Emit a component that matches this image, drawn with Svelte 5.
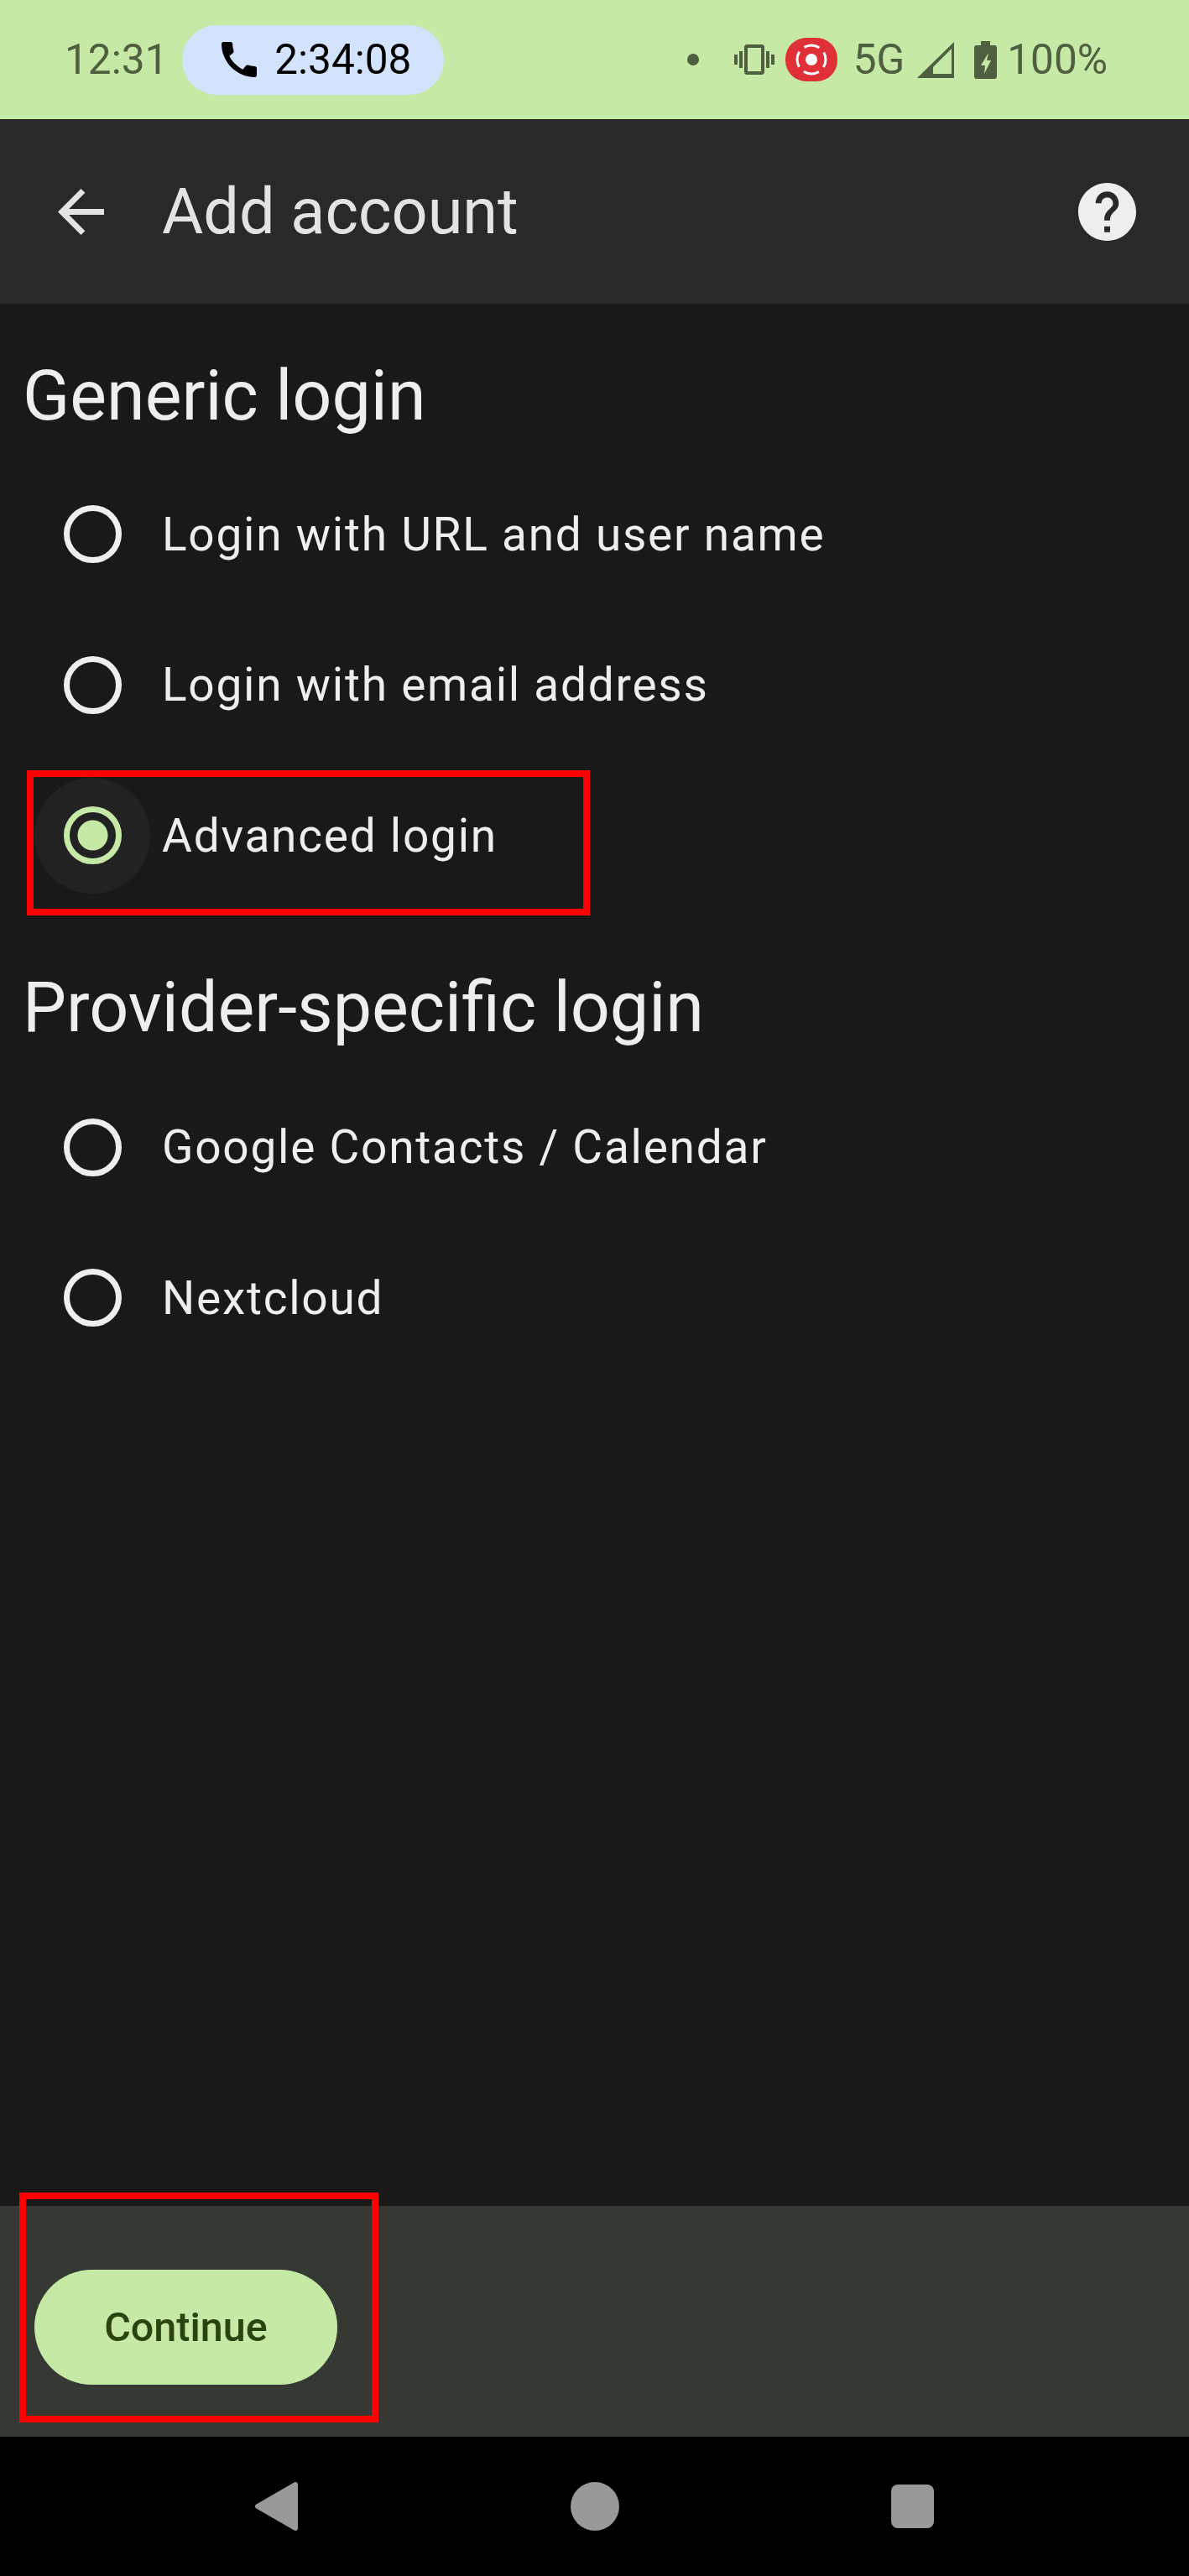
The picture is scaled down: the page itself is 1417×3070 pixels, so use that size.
<script>
	const genericLogins = [
		{ label: 'Login with URL and user name', selected: false },
		{ label: 'Login with email address', selected: false },
		{ label: 'Advanced login', selected: true }
	];
	const providerLogins = [
		{ label: 'Google Contacts / Calendar', selected: false },
		{ label: 'Nextcloud', selected: false }
	];
</script>

{#snippet radioRow(item)}
	<div class="row">
		<span class="radio-wrap" class:halo={item.selected}>
			<span class="radio" class:checked={item.selected}></span>
		</span>
		<span class="row-label">{item.label}</span>
		{#if item.selected}
			<span class="mark mark-row"></span>
		{/if}
	</div>
{/snippet}

<main class="screen">
	<!-- Status bar -->
	<header class="status">
		<span class="time">12:31</span>
		<div class="call-pill">
			<svg class="phone" viewBox="3 3 18 18" aria-hidden="true">
				<path d="M20.01 15.38c-1.23 0-2.42-.2-3.53-.56-.35-.12-.74-.03-1.01.24l-1.57 1.97c-2.83-1.35-5.48-3.9-6.89-6.83l1.95-1.66c.27-.28.35-.67.24-1.02-.37-1.11-.56-2.3-.56-3.53 0-.54-.45-.99-.99-.99H4.19C3.65 3 3 3.24 3 3.99 3 13.28 10.73 21 20.01 21c.71 0 .99-.63.99-1.18v-3.45c0-.54-.45-.99-.99-.99z" />
			</svg>
			<span class="call-time">2:34:08</span>
		</div>
		<div class="status-right">
			<span class="dot"></span>
			<svg class="vibrate" viewBox="0 3 24 18" aria-hidden="true">
				<path d="M0 15h2V9H0v6zm3 2h2V7H3v10zm19-8v6h2V9h-2zm-3 8h2V7h-2v10zM16.5 3h-9C6.67 3 6 3.67 6 4.5v15c0 .83.67 1.5 1.5 1.5h9c.83 0 1.5-.67 1.5-1.5v-15c0-.83-.67-1.5-1.5-1.5zM16 19H8V5h8v14z" />
			</svg>
			<svg class="record" viewBox="0 0 62 52" aria-hidden="true">
				<rect width="62" height="52" rx="25" fill="#df3038" />
				<circle cx="31" cy="26" r="7" fill="#fff" />
				<circle cx="31" cy="26" r="17" fill="none" stroke="#fff" stroke-width="3" stroke-dasharray="19 7.7" stroke-dashoffset="9.5" />
			</svg>
			<span class="network">5G</span>
			<svg class="signal" viewBox="0 0 44 43" aria-hidden="true">
				<path fill-rule="evenodd" d="M44 0V43H0ZM19 38H41V8L19 30Z" />
			</svg>
			<svg class="battery" viewBox="0 0 27 45" aria-hidden="true">
				<path d="M8 0h11v5h5a3 3 0 0 1 3 3v34a3 3 0 0 1-3 3H3a3 3 0 0 1-3-3V8a3 3 0 0 1 3-3h5z" />
				<path class="bolt" d="M17 14L8 29h5l-1 10 8-16h-5z" />
			</svg>
			<span class="percent">100%</span>
		</div>
	</header>

	<!-- App bar -->
	<div class="appbar">
		<svg class="back" viewBox="4 4 16 16" aria-hidden="true">
			<path d="M20 11H7.83l5.59-5.59L12 4l-8 8 8 8 1.41-1.41L7.83 13H20v-2z" />
		</svg>
		<h1 class="title">Add account</h1>
		<svg class="help" viewBox="2 2 20 20" aria-hidden="true">
			<path d="M12 2C6.48 2 2 6.48 2 12s4.48 10 10 10 10-4.48 10-10S17.52 2 12 2zm1 17h-2v-2h2v2zm2.07-7.75l-.9.92C13.45 12.9 13 13.5 13 15h-2v-.5c0-1.1.45-2.1 1.17-2.83l1.24-1.26c.37-.36.59-.86.59-1.41 0-1.1-.9-2-2-2s-2 .9-2 2H8c0-2.21 1.79-4 4-4s4 1.79 4 4c0 .88-.36 1.68-.93 2.25z" />
		</svg>
	</div>

	<!-- Login options -->
	<section class="content">
		<h2 class="heading first">Generic login</h2>
		{#each genericLogins as item}
			{@render radioRow(item)}
		{/each}
		<h2 class="heading second">Provider-specific login</h2>
		{#each providerLogins as item}
			{@render radioRow(item)}
		{/each}
	</section>

	<!-- Bottom action -->
	<div class="actions">
		<button class="continue" type="button">Continue</button>
		<span class="mark mark-action"></span>
	</div>

	<!-- Navigation bar -->
	<nav class="nav">
		<svg class="nav-back" viewBox="0 0 52 58" aria-hidden="true">
			<path d="M3 29L48 3V55Z" />
		</svg>
		<span class="nav-home"></span>
		<span class="nav-recent"></span>
	</nav>
</main>

<style>
	:global(body) {
		margin: 0;
		background: #191919;
	}

	.screen {
		width: 1417px;
		height: 3070px;
		display: flex;
		flex-direction: column;
		overflow: hidden;
		font-family: Roboto, "Liberation Sans", sans-serif;
		background: #191919;
	}

	.status {
		height: 142px;
		flex: none;
		display: flex;
		align-items: center;
		padding: 0 97px 0 77px;
		box-sizing: border-box;
		background: #c6e9a5;
		color: #4f5f3f;
		font-size: 49.5px;
	}

	.call-pill {
		margin-left: 17px;
		width: 312px;
		height: 83px;
		box-sizing: border-box;
		padding-left: 47px;
		display: flex;
		align-items: center;
		border-radius: 42px;
		background: #d3e3fd;
		color: #000;
	}

	.phone {
		width: 42px;
		height: 42px;
		fill: #000;
	}

	.call-time {
		margin-left: 21px;
	}

	.status-right {
		margin-left: auto;
		display: flex;
		align-items: center;
	}

	.status-right svg {
		fill: #4f5f3f;
		flex: none;
	}

	.dot {
		width: 14px;
		height: 14px;
		border-radius: 50%;
		background: #4f5f3f;
	}

	.vibrate {
		width: 48px;
		height: 36px;
		margin-left: 42px;
	}

	.record {
		width: 62px;
		height: 52px;
		margin-left: 13px;
	}

	.network {
		margin-left: 19px;
	}

	.signal {
		width: 44px;
		height: 43px;
		margin-left: 15px;
	}

	.battery {
		width: 27px;
		height: 45px;
		margin-left: 24px;
	}

	.status-right .bolt {
		fill: #c6e9a5;
	}

	.percent {
		margin-left: 12px;
	}

	.appbar {
		height: 220px;
		flex: none;
		display: flex;
		align-items: center;
		padding: 0 63px 0 69px;
		box-sizing: border-box;
		background: #292929;
	}

	.back {
		width: 55px;
		height: 55px;
		fill: #e3e3e3;
	}

	.title {
		margin: 0 0 0 69px;
		font-size: 75.6px;
		font-weight: 400;
		color: #e3e3e3;
	}

	.help {
		width: 69px;
		height: 69px;
		margin-left: auto;
		fill: #eee;
	}

	.content {
		flex: 1;
		padding-left: 27px;
	}

	.heading {
		height: 80px;
		line-height: 80px;
		font-size: 82.6px;
		font-weight: 400;
		color: #eee;
	}

	.first {
		margin: 70px 0 35px;
	}

	.second {
		margin: 75px 0 37px;
	}

	.row {
		position: relative;
		height: 179.5px;
		display: flex;
		align-items: center;
		margin-left: -27px;
	}

	.radio-wrap {
		width: 138px;
		height: 138px;
		margin-left: 41px;
		display: flex;
		align-items: center;
		justify-content: center;
		border-radius: 50%;
	}

	.halo {
		background: #222;
	}

	.radio {
		width: 69px;
		height: 69px;
		box-sizing: border-box;
		border: 7px solid #eee;
		border-radius: 50%;
	}

	.checked {
		border-color: #c6e9a5;
		background: radial-gradient(circle, #c6e9a5 17.5px, transparent 18.5px);
	}

	.row-label {
		margin-left: 14px;
		font-size: 55px;
		letter-spacing: 1.75px;
		color: #eee;
	}

	.mark {
		position: absolute;
		box-sizing: border-box;
		border: 8px solid #f00;
		pointer-events: none;
	}

	.mark-row {
		left: 32px;
		top: 12px;
		width: 671px;
		height: 173px;
	}

	.actions {
		position: relative;
		height: 275px;
		flex: none;
		display: flex;
		align-items: flex-end;
		padding: 0 0 62px 41px;
		box-sizing: border-box;
		background: #363833;
	}

	.continue {
		width: 361px;
		height: 137px;
		border: none;
		border-radius: 69px;
		background: #c6e9a5;
		color: #2a4410;
		font-family: inherit;
		font-size: 48.5px;
		font-weight: 500;
	}

	.mark-action {
		left: 23px;
		top: -16px;
		width: 428px;
		height: 274px;
	}

	.nav {
		height: 166px;
		flex: none;
		display: grid;
		grid-template-columns: repeat(3, 379px);
		justify-content: center;
		justify-items: center;
		align-items: center;
		background: #000;
	}

	.nav-back {
		width: 52px;
		height: 58px;
	}

	.nav-back path {
		fill: #999;
		stroke: #999;
		stroke-width: 6;
		stroke-linejoin: round;
	}

	.nav-home {
		width: 58px;
		height: 58px;
		border-radius: 50%;
		background: #999;
	}

	.nav-recent {
		width: 51px;
		height: 52px;
		border-radius: 8px;
		background: #999;
	}
</style>
